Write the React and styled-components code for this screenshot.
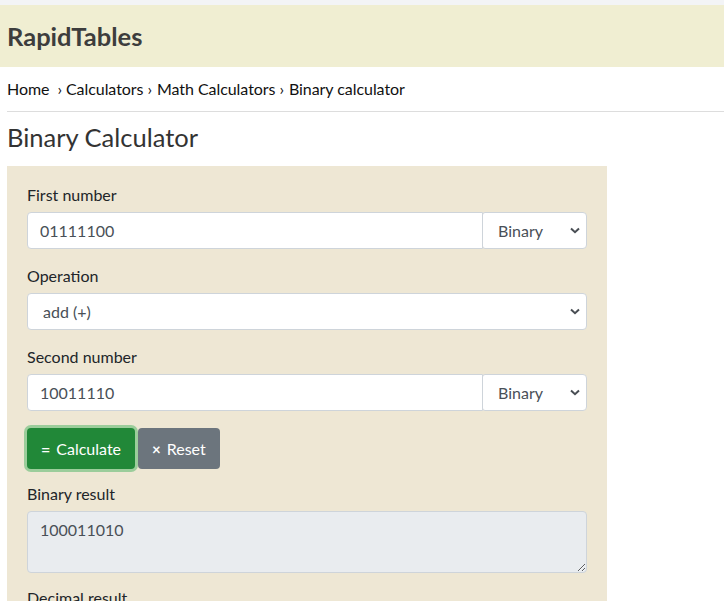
import React from "react";
import styled, { createGlobalStyle } from "styled-components";

const Global = createGlobalStyle`
  html, body { margin: 0; padding: 0; background: #fff; }
  body {
    font-family: Lato, "Open Sans", "Noto Sans", sans-serif;
    font-size: 16px;
    line-height: 1.5;
    color: #212529;
  }
  * { box-sizing: border-box; }
`;

const TopStrip = styled.div`
  height: 5px;
  background: #f3f4f6;
`;

const Header = styled.header`
  height: 62px;
  background: #f0eed2;
  display: flex;
  align-items: center;
  padding-left: 7px;
`;

const Logo = styled.div`
  font-size: 25.5px;
  font-weight: 700;
  color: #3d3d3d;
  line-height: 1;
  padding-top: 1px;
`;

const Main = styled.main`
  padding: 0 7px;
`;

const Breadcrumb = styled.nav`
  display: flex;
  align-items: center;
  height: 45px;
  padding-bottom: 1px;
  border-bottom: 1px solid #dddddd;
  margin-right: -7px;
  color: #111;
  font-size: 16px;
  letter-spacing: -0.05px;
`;

const Crumb = styled.span`
  white-space: nowrap;
`;

const Sep = styled.span`
  font-size: 16px;
  margin: 0 ${(p) => p.$gap || 5}px 0 ${(p) => p.$lead || 4}px;
`;

const Title = styled.h1`
  margin: 10px 0 13px;
  font-size: 25.5px;
  font-weight: 400;
  line-height: 31px;
  color: #333;
`;

const Panel = styled.section`
  width: 600px;
  background: #eee7d4;
  padding: 17px 20px 20px;
`;

const Group = styled.div`
  margin-bottom: ${(p) => p.$mb ?? 15}px;
`;

const Label = styled.label`
  display: block;
  line-height: 24px;
  margin-bottom: 5px;
  color: #212529;
`;

const Row = styled.div`
  display: flex;
`;

const fieldBase = `
  height: 37px;
  border: 1px solid #ced4da;
  background-color: #fff;
  font-family: Lato, "Open Sans", "Noto Sans", sans-serif;
  font-size: 16px;
  color: #495057;
  outline: none;
`;

const TextInput = styled.input`
  ${fieldBase}
  flex: 1;
  min-width: 0;
  padding: 0 12px;
  border-radius: 4px 0 0 4px;
`;

const Select = styled.select`
  ${fieldBase}
  appearance: none;
  -webkit-appearance: none;
  width: ${(p) => p.$w || "100%"};
  flex: none;
  padding: 0 24px 0 15px;
  border-radius: ${(p) => (p.$joined ? "3px 4px 4px 3px" : "4px")};
  margin-left: ${(p) => (p.$joined ? "-1px" : "0")};
  background-image: url("data:image/svg+xml,%3Csvg xmlns='http://www.w3.org/2000/svg' width='10' height='7' viewBox='0 0 10 7'%3E%3Cpath d='M1 1.5 L5 5.2 L9 1.5' fill='none' stroke='%23494e54' stroke-width='2'/%3E%3C/svg%3E");
  background-repeat: no-repeat;
  background-position: right 6px center;
`;

const Buttons = styled.div`
  display: flex;
  gap: 3px;
  margin-bottom: 13px;
`;

const Button = styled.button`
  height: 41px;
  padding: 0 14px;
  border: none;
  border-radius: 4px;
  font-family: Lato, "Open Sans", "Noto Sans", sans-serif;
  font-size: 16px;
  color: #fff;
  background: ${(p) => (p.$variant === "success" ? "#218838" : "#6c757d")};
  box-shadow: ${(p) =>
    p.$focus ? "0 0 0 3px rgba(72, 180, 97, 0.5)" : "none"};
  display: flex;
  align-items: center;
  gap: 6px;
  cursor: pointer;
`;

const Glyph = styled.span`
  font-weight: 700;
  font-size: ${(p) => p.$size || 16}px;
`;

const Result = styled.textarea`
  display: block;
  width: 100%;
  height: 62px;
  padding: 6px 12px;
  border: 1px solid #ced4da;
  border-radius: 4px;
  background: #e9ecef;
  font-family: Lato, "Open Sans", "Noto Sans", sans-serif;
  font-size: 16px;
  line-height: 24px;
  color: #495057;
  resize: vertical;
  outline: none;
`;

export default function App() {
  return (
    <>
      <Global />
      <TopStrip />
      <Header>
        <Logo>RapidTables</Logo>
      </Header>
      <Main>
        <Breadcrumb>
          <Crumb>Home</Crumb>
          <Sep $lead={8} $gap={4}>›</Sep>
          <Crumb>Calculators</Crumb>
          <Sep>›</Sep>
          <Crumb>Math Calculators</Crumb>
          <Sep>›</Sep>
          <Crumb>Binary calculator</Crumb>
        </Breadcrumb>
        <Title>Binary Calculator</Title>
        <Panel>
          <Group>
            <Label>First number</Label>
            <Row>
              <TextInput defaultValue="01111100" />
              <Select $w="105px" $joined defaultValue="Binary">
                <option>Binary</option>
                <option>Decimal</option>
                <option>Hex</option>
              </Select>
            </Row>
          </Group>
          <Group>
            <Label>Operation</Label>
            <Select defaultValue="add (+)">
              <option>add (+)</option>
              <option>subtract (-)</option>
              <option>multiply (×)</option>
              <option>divide (÷)</option>
            </Select>
          </Group>
          <Group $mb={17}>
            <Label>Second number</Label>
            <Row>
              <TextInput defaultValue="10011110" />
              <Select $w="105px" $joined defaultValue="Binary">
                <option>Binary</option>
                <option>Decimal</option>
                <option>Hex</option>
              </Select>
            </Row>
          </Group>
          <Buttons>
            <Button $variant="success" $focus>
              <Glyph>=</Glyph>Calculate
            </Button>
            <Button>
              <Glyph $size={15}>×</Glyph>Reset
            </Button>
          </Buttons>
          <Group $mb={13}>
            <Label>Binary result</Label>
            <Result readOnly value="100011010" />
          </Group>
          <Group>
            <Label>Decimal result</Label>
            <Result readOnly value="282" />
          </Group>
        </Panel>
      </Main>
    </>
  );
}
